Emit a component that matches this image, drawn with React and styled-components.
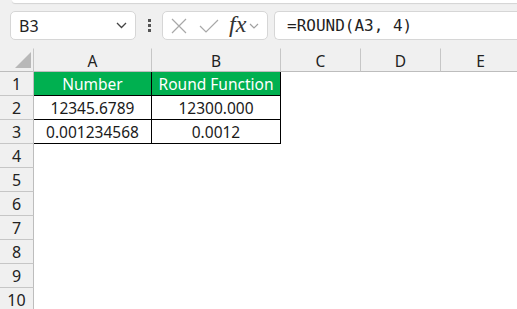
import React from 'react';
import styled, { createGlobalStyle } from 'styled-components';

const GlobalStyle = createGlobalStyle`
  html, body {
    margin: 0;
    padding: 0;
    background: #ffffff;
    overflow: hidden;
  }
`;

const Page = styled.div`
  width: 517px;
  height: 309px;
  overflow: hidden;
  font-family: 'Noto Sans', 'Open Sans', sans-serif;
  color: #1f1f1f;
`;

/* Formula bar */
const Toolbar = styled.div`
  position: relative;
  height: 48px;
  background: #f0f0f0;
  display: flex;
  align-items: flex-start;
  padding: 11px 0 0 10px;
  box-sizing: border-box;
`;

const RibbonEdge = styled.div`
  position: absolute;
  top: 0;
  left: 12px;
  right: 0;
  height: 3px;
  background: #ffffff;
  border-bottom-left-radius: 4px;
  box-shadow: 0 1px 1px rgba(0, 0, 0, 0.12);
`;

const Box = styled.div`
  height: 29px;
  box-sizing: border-box;
  background: #ffffff;
  border: 1px solid #d6d6d6;
  border-radius: 5px;
  display: flex;
  align-items: center;
`;

const NameBox = styled(Box)`
  width: 126px;
  padding: 0 8px;
  justify-content: space-between;
  font-size: 16px;
  color: #222;
`;

const Dots = styled.div`
  width: 26px;
  height: 29px;
  display: flex;
  flex-direction: column;
  align-items: center;
  justify-content: center;
  gap: 2px;

  span {
    width: 3px;
    height: 3px;
    background: #555;
  }
`;

const IconBox = styled(Box)`
  width: 106px;
  padding-left: 8px;
`;

const FxText = styled.span`
  font-family: 'Liberation Serif', 'DejaVu Serif', serif;
  font-style: italic;
  font-size: 24px;
  color: #333;
  margin-left: 10px;
  line-height: 1;
  margin-top: -4px;
`;

const FormulaInput = styled(Box)`
  margin-left: 6px;
  flex: 1;
  border-right: none;
  border-top-right-radius: 0;
  border-bottom-right-radius: 0;
  padding-left: 12px;
  font-family: 'DejaVu Sans Mono', 'Liberation Mono', monospace;
  font-size: 16px;
  color: #1f1f1f;
`;

/* Grid */
const Sheet = styled.div`
  display: grid;
  grid-template-columns: 34px 118px 129px 80px 80px 80px;
  grid-auto-rows: 24px;
  font-size: 15.5px;
`;

const Cell = styled.div`
  box-sizing: border-box;
  display: flex;
  align-items: center;
  justify-content: center;
  white-space: nowrap;
  padding-top: 1px;
  background: ${({ $green }) => ($green ? '#00b050' : '#ffffff')};
  color: ${({ $green }) => ($green ? '#ffffff' : '#1a1a1a')};
  border-right: ${({ $table }) => ($table ? '1px solid #000' : 'none')};
  border-bottom: ${({ $table }) => ($table ? '1px solid #000' : 'none')};
`;

const ColHead = styled.div`
  box-sizing: border-box;
  background: #f0f0f0;
  display: flex;
  align-items: center;
  justify-content: center;
  padding-top: 1px;
  color: #222;
  border-right: 1px solid #c6c6c6;
  border-bottom: 1px solid #bdbdbd;
  border-top: 1px solid #f0f0f0;
`;

const RowHead = styled.div`
  box-sizing: border-box;
  background: #f0f0f0;
  display: flex;
  align-items: center;
  justify-content: center;
  padding-top: 1px;
  color: #222;
  font-size: 16px;
  border-right: 1px solid #bdbdbd;
  border-bottom: 1px solid #c6c6c6;
`;

const Corner = styled(ColHead)`
  justify-content: flex-end;
  align-items: flex-end;
  padding: 0 2px 3px 0;
`;

const cols = ['A', 'B', 'C', 'D', 'E'];
const data = [
  ['Number', 'Round Function'],
  ['12345.6789', '12300.000'],
  ['0.001234568', '0.0012'],
];

const App = () => {
  const rows = Array.from({ length: 10 }, (_, i) => i + 1);

  return (
    <Page>
      <GlobalStyle />
      <Toolbar>
        <RibbonEdge />
        <NameBox>
          <span>B3</span>
          <svg width="11" height="7" viewBox="0 0 11 7">
            <path d="M1 1 L5.5 5.5 L10 1" fill="none" stroke="#444" strokeWidth="1.3" />
          </svg>
        </NameBox>
        <Dots>
          <span />
          <span />
          <span />
        </Dots>
        <IconBox>
          <svg width="16" height="16" viewBox="0 0 16 16">
            <path d="M1 1 L15 15 M15 1 L1 15" stroke="#a8a8a8" strokeWidth="1.2" fill="none" />
          </svg>
          <svg width="20" height="16" viewBox="0 0 20 16" style={{ marginLeft: 12 }}>
            <path d="M1 8 L7 14 L19 2" stroke="#a8a8a8" strokeWidth="1.2" fill="none" />
          </svg>
          <FxText>fx</FxText>
          <svg width="10" height="6" viewBox="0 0 10 6" style={{ marginLeft: 3 }}>
            <path d="M1 1 L5 5 L9 1" fill="none" stroke="#a0a0a0" strokeWidth="1.2" />
          </svg>
        </IconBox>
        <FormulaInput>=ROUND(A3, 4)</FormulaInput>
      </Toolbar>
      <Sheet>
        <Corner>
          <svg width="16" height="16" viewBox="0 0 16 16">
            <path d="M16 0 L16 16 L0 16 Z" fill="#b8b8b8" />
          </svg>
        </Corner>
        {cols.map((c) => (
          <ColHead key={c}>{c}</ColHead>
        ))}
        {rows.map((r) => (
          <React.Fragment key={r}>
            <RowHead>{r}</RowHead>
            {cols.map((c, ci) => {
              const val = data[r - 1] && ci < 2 ? data[r - 1][ci] : '';
              const inTable = r <= 3 && ci < 2;
              return (
                <Cell key={c} $table={inTable} $green={r === 1 && ci < 2}>
                  {val}
                </Cell>
              );
            })}
          </React.Fragment>
        ))}
      </Sheet>
    </Page>
  );
};

export default App;
